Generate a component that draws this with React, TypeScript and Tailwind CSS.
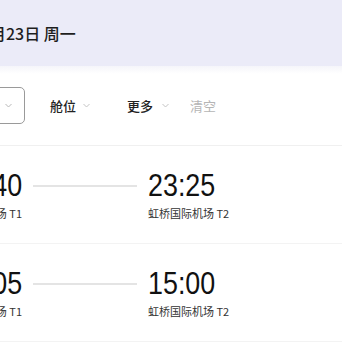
import { Fragment } from 'react'

type Flight = { dep: string; depPort: string; arr: string; arrPort: string }

const flights: Flight[] = [
  { dep: '20:40', depPort: '首都国际机场 T1', arr: '23:25', arrPort: '虹桥国际机场 T2' },
  { dep: '12:05', depPort: '首都国际机场 T1', arr: '15:00', arrPort: '虹桥国际机场 T2' },
]

const cjk = "font-['Noto_Sans_CJK_SC','Noto_Sans',sans-serif]"
// 窄体数字：用 Liberation Sans 横向压缩
const timeFont = "font-['Liberation_Sans',sans-serif] text-[32px] leading-[32px] text-[#111] whitespace-nowrap scale-x-[0.84]"

function Caret({ color = '#c4c4c4' }: { color?: string }) {
  return (
    <svg width="7" height="5" viewBox="0 0 7 5" className="shrink-0">
      <polyline points="0.5,1 3.5,4 6.5,1" fill="none" stroke={color} strokeWidth="1" />
    </svg>
  )
}

export default function App() {
  return (
    <div className={`w-[342px] h-[342px] overflow-hidden bg-white ${cjk}`}>
      {/* 日期 */}
      <div className="h-[66px] bg-[#ebebf8] flex items-center">
        <span className="-ml-[10px] text-[16px] font-medium text-[#1e1e1e] whitespace-nowrap">月23日 周一</span>
      </div>

      {/* 筛选 */}
      <div className="h-[80px] flex items-center border-b border-[#f0f0f0] bg-gradient-to-b from-[#f5f5fa] to-white to-[10%]">
        <div className="-ml-[12px] w-[37px] h-[37px] rounded-[5px] border border-[#9a9a9a] flex items-center justify-end pr-[12px]">
          <Caret color="#b8b8b8" />
        </div>
        <div className="ml-[25px] flex items-center gap-[7px]">
          <span className="text-[13px] font-medium text-[#222]">舱位</span>
          <Caret />
        </div>
        <div className="ml-[37px] flex items-center gap-[9px]">
          <span className="text-[13px] font-medium text-[#222]">更多</span>
          <Caret />
        </div>
        <span className="ml-[21px] text-[13px] text-[#b5b5b5]">清空</span>
      </div>

      {/* 航班 */}
      {flights.map((f, i) => (
        <Fragment key={i}>
          <div className="flex items-start pt-[23px] pb-[24px] border-b border-[#f3f3f3]">
            <div className="w-[22px] flex flex-col items-end">
              <span className={`${timeFont} origin-right`}>{f.dep}</span>
              <span className="mt-[7px] text-[11px] leading-[11px] text-[#333] whitespace-nowrap">{f.depPort}</span>
            </div>
            <div className="ml-[11px] w-[104px] h-[34px] flex items-center">
              <div className="w-full h-[2px] bg-[#e4e4e4]" />
            </div>
            <div className="ml-[11px] flex flex-col items-start">
              <span className={`${timeFont} origin-left`}>{f.arr}</span>
              <span className="mt-[7px] text-[11px] leading-[11px] text-[#333] whitespace-nowrap">{f.arrPort}</span>
            </div>
          </div>
        </Fragment>
      ))}
    </div>
  )
}
